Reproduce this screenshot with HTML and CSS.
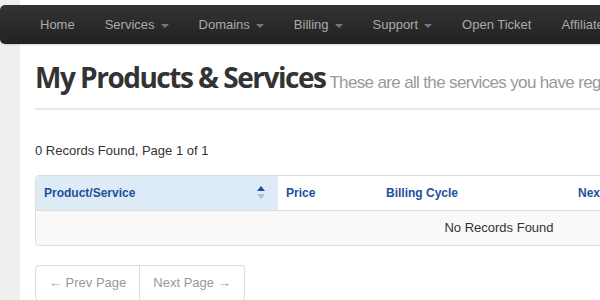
FILE: index.html
```html
<!DOCTYPE html>
<html>
<head>
<meta charset="utf-8">
<link rel="stylesheet" href="styles.css">
</head>
<body>
<div class="shell">
  <div class="sidebar"></div>
  <nav class="navbar">
    <a class="nav-item">Home</a>
    <a class="nav-item">Services<span class="caret"></span></a>
    <a class="nav-item">Domains<span class="caret"></span></a>
    <a class="nav-item">Billing<span class="caret"></span></a>
    <a class="nav-item">Support<span class="caret"></span></a>
    <a class="nav-item">Open Ticket</a>
    <a class="nav-item">Affiliates</a>
  </nav>
  <main class="main">
    <div class="page-header">
      <h1 class="title">My Products &amp; Services</h1>
      <span class="subtitle">These are all the services you have registered in this account.</span>
    </div>
    <p class="records">0 Records Found, Page 1 of 1</p>
    <div class="table">
      <div class="thead">
        <div class="th th-sorted">Product/Service
          <span class="sort">
            <svg width="8" height="14" viewBox="0 0 8 14"><polygon points="0,5 4,0 8,5" fill="#1d4f9e"/><polygon points="0,8 8,8 4,13" fill="#a9bfdc"/></svg>
          </span>
        </div>
        <div class="th th-price">Price</div>
        <div class="th th-cycle">Billing Cycle</div>
        <div class="th th-next">Next Due Date</div>
      </div>
      <div class="tbody">No Records Found</div>
    </div>
    <div class="pager">
      <a class="page-btn">&larr; Prev Page</a>
      <a class="page-btn">Next Page &rarr;</a>
    </div>
  </main>
</div>
</body>
</html>
```

FILE: styles.css
```css
html, body {
  margin: 0;
  padding: 0;
  overflow: hidden;
  background: #fff;
  font-family: "Liberation Sans", Arial, sans-serif;
  color: #333;
}

.shell {
  display: grid;
  grid-template-columns: 20px 1fr;
  grid-template-rows: auto 1fr;
  width: 1400px;
  min-height: 300px;
}

.sidebar {
  grid-column: 1;
  grid-row: 1 / 3;
  background: #efefef;
}

.navbar {
  grid-column: 1 / 3;
  grid-row: 1;
  margin-top: 5px;
  height: 39px;
  display: flex;
  align-items: center;
  padding-left: 25px;
  background: linear-gradient(#333, #222);
  border-radius: 5px 0 0 5px;
  box-shadow: 0 1px 2px rgba(0,0,0,0.15);
}

.nav-item {
  display: flex;
  align-items: center;
  padding: 0 15px;
  font-size: 13px;
  color: #aaa;
  white-space: nowrap;
}

.caret {
  display: inline-block;
  width: 0;
  height: 0;
  margin-left: 6px;
  margin-top: 2px;
  border-top: 4px solid #777;
  border-left: 4px solid transparent;
  border-right: 4px solid transparent;
}

.main {
  grid-column: 2;
  grid-row: 2;
  padding-left: 15px;
}

.page-header {
  display: flex;
  align-items: baseline;
  margin-top: 16px;
  padding-bottom: 14px;
  border-bottom: 2px solid #e8e8e8;
  white-space: nowrap;
}

.title {
  margin: 0;
  font-family: "Open Sans", sans-serif;
  font-weight: 700;
  font-size: 28px;
  line-height: 34px;
  letter-spacing: -1.5px;
  color: #333;
}

.subtitle {
  margin-left: 4px;
  font-size: 17px;
  color: #999;
  letter-spacing: -0.65px;
}

.records {
  margin: 32px 0 0;
  font-size: 13px;
  line-height: 18px;
}

.table {
  margin-top: 15px;
  width: 926px;
  border: 1px solid #ddd;
  border-radius: 4px;
  overflow: hidden;
}

.thead {
  display: flex;
  height: 34px;
}

.th {
  display: flex;
  align-items: center;
  padding-left: 8px;
  font-size: 12px;
  font-weight: 700;
  color: #1d4f9e;
  box-sizing: border-box;
}

.th-sorted {
  width: 242px;
  background: #dcebf5;
  justify-content: space-between;
  padding-right: 13px;
}

.sort {
  display: flex;
}

.th-price { width: 100px; }
.th-cycle { width: 192px; }
.th-next { flex: 1; }

.tbody {
  height: 34px;
  line-height: 34px;
  border-top: 1px solid #ddd;
  background: #f9f9f9;
  text-align: center;
  font-size: 13px;
}

.pager {
  display: flex;
  margin-top: 19px;
}

.page-btn {
  display: block;
  height: 36px;
  line-height: 34px;
  padding: 0 13px;
  box-sizing: border-box;
  border: 1px solid #ddd;
  font-size: 13px;
  color: #999;
  white-space: nowrap;
}

.page-btn:first-child {
  border-radius: 4px 0 0 4px;
}

.page-btn + .page-btn {
  border-left: none;
  border-radius: 0 4px 4px 0;
}
```
